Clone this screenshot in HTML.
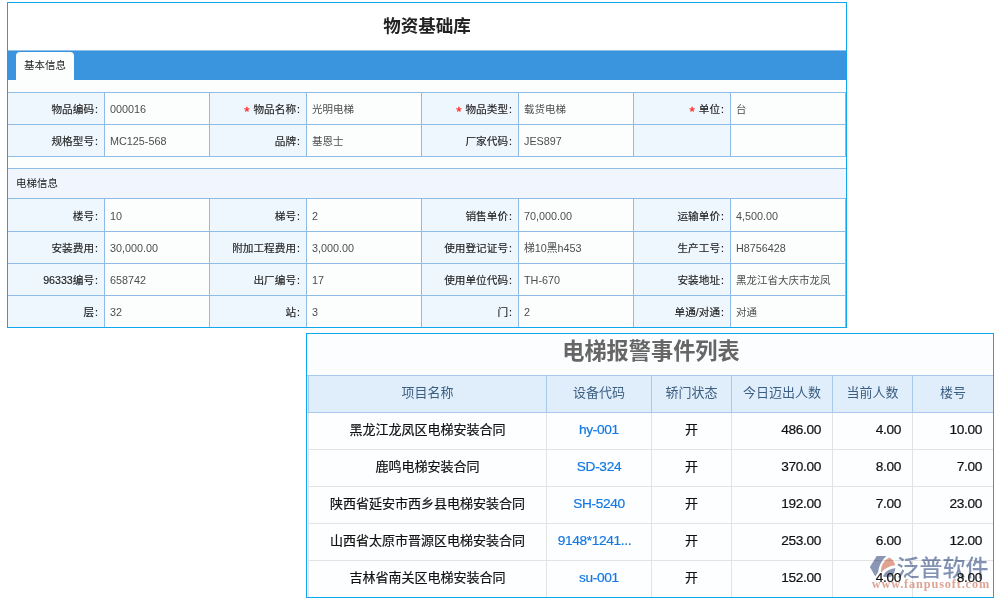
<!DOCTYPE html>
<html lang="zh-CN"><head><meta charset="utf-8"><title>物资基础库</title>
<style>
html,body{margin:0;padding:0;background:#fff;}
body{width:1000px;height:600px;position:relative;overflow:hidden;font-family:"Liberation Sans","Noto Sans CJK SC",sans-serif;}
div{position:absolute;box-sizing:border-box;white-space:nowrap;overflow:hidden;}
.c{font-size:10.5px;color:#333;}
.lab{font-size:10.65px;background:#eff7fe;text-align:right;padding-right:6px;padding-top:1px;color:#222;-webkit-text-stroke:0.15px #222;}
.co{margin-left:1px;}
.cj{font-size:10.5px !important;}
.val{background:#fcfefe;text-align:left;padding-left:5px;padding-top:1px;color:#4d4d4d;font-size:10.8px;}
.req{color:#f22;-webkit-text-stroke:0.3px #f22;font-size:13.5px;line-height:1px;position:relative;top:2.5px;margin-right:1px;}
.ln{background:#8fbce4;}
.t2 .hd{background:#e0edfb;color:#3b5f80;font-size:13px;text-align:center;}
.t2 .td{background:#fdfeff;color:#111;font-size:13px;-webkit-text-stroke:0.2px #111;}
.ctr{text-align:center;}
.t2 .num{text-align:right;padding-right:11px;font-size:13.7px;letter-spacing:-0.35px;}
.t2 .lnk{color:#1479e4;-webkit-text-stroke:0.2px #1479e4;font-size:13.7px;letter-spacing:-0.35px;}
</style></head><body>

<div style="left:7px;top:2px;width:840px;height:326px;border:1px solid #0fa8ee;background:#fff;"></div>
<div style="left:8px;top:3px;width:838px;height:47px;line-height:47px;text-align:center;font-size:17.5px;font-weight:bold;color:#222;">物资基础库</div>
<div style="left:8px;top:50px;width:838px;height:30px;background:#3a94de;"></div>
<div style="left:8px;top:50px;width:838px;height:1px;background:#8dc1ec;"></div>
<div style="left:16px;top:52px;width:58px;height:28px;background:#fcfefe;border-radius:4px 4px 0 0;text-align:center;line-height:26px;font-size:10.5px;color:#222;">基本信息</div>
<div style="left:8px;top:80px;width:838px;height:12px;background:#fcfefe;"></div>
<div class="ln" style="left:8px;top:92px;width:838px;height:65px;"></div>
<div class="c lab" style="left:8px;top:93px;width:96px;height:31px;line-height:31px">物品编码<span class="co">:</span></div>
<div class="c val" style="left:105px;top:93px;width:104px;height:31px;line-height:31px">000016</div>
<div class="c lab" style="left:210px;top:93px;width:96px;height:31px;line-height:31px"><span class="req">*</span> 物品名称<span class="co">:</span></div>
<div class="c val cj" style="left:307px;top:93px;width:114px;height:31px;line-height:31px">光明电梯</div>
<div class="c lab" style="left:422px;top:93px;width:96px;height:31px;line-height:31px"><span class="req">*</span> 物品类型<span class="co">:</span></div>
<div class="c val cj" style="left:519px;top:93px;width:114px;height:31px;line-height:31px">载货电梯</div>
<div class="c lab" style="left:634px;top:93px;width:96px;height:31px;line-height:31px"><span class="req">*</span> 单位<span class="co">:</span></div>
<div class="c val cj" style="left:731px;top:93px;width:114px;height:31px;line-height:31px">台</div>
<div class="c lab" style="left:8px;top:125px;width:96px;height:31px;line-height:31px">规格型号<span class="co">:</span></div>
<div class="c val" style="left:105px;top:125px;width:104px;height:31px;line-height:31px">MC125-568</div>
<div class="c lab" style="left:210px;top:125px;width:96px;height:31px;line-height:31px">品牌<span class="co">:</span></div>
<div class="c val cj" style="left:307px;top:125px;width:114px;height:31px;line-height:31px">基恩士</div>
<div class="c lab" style="left:422px;top:125px;width:96px;height:31px;line-height:31px">厂家代码<span class="co">:</span></div>
<div class="c val" style="left:519px;top:125px;width:114px;height:31px;line-height:31px">JES897</div>
<div class="c lab" style="left:634px;top:125px;width:96px;height:31px;line-height:31px"></div>
<div class="c val" style="left:731px;top:125px;width:114px;height:31px;line-height:31px"></div>
<div style="left:8px;top:157px;width:838px;height:11px;background:#fcfefe;"></div>
<div class="ln" style="left:8px;top:168px;width:838px;height:159px;"></div>
<div class="c" style="left:8px;top:169px;width:838px;height:29px;line-height:29px;background:#f1f5fe;padding-left:8px;color:#222;">电梯信息</div>
<div class="c lab" style="left:8px;top:199px;width:96px;height:32px;line-height:32px">楼号<span class="co">:</span></div>
<div class="c val" style="left:105px;top:199px;width:104px;height:32px;line-height:32px">10</div>
<div class="c lab" style="left:210px;top:199px;width:96px;height:32px;line-height:32px">梯号<span class="co">:</span></div>
<div class="c val" style="left:307px;top:199px;width:114px;height:32px;line-height:32px">2</div>
<div class="c lab" style="left:422px;top:199px;width:96px;height:32px;line-height:32px">销售单价<span class="co">:</span></div>
<div class="c val" style="left:519px;top:199px;width:114px;height:32px;line-height:32px">70,000.00</div>
<div class="c lab" style="left:634px;top:199px;width:96px;height:32px;line-height:32px">运输单价<span class="co">:</span></div>
<div class="c val" style="left:731px;top:199px;width:114px;height:32px;line-height:32px">4,500.00</div>
<div class="c lab" style="left:8px;top:232px;width:96px;height:31px;line-height:31px">安装费用<span class="co">:</span></div>
<div class="c val" style="left:105px;top:232px;width:104px;height:31px;line-height:31px">30,000.00</div>
<div class="c lab" style="left:210px;top:232px;width:96px;height:31px;line-height:31px">附加工程费用<span class="co">:</span></div>
<div class="c val" style="left:307px;top:232px;width:114px;height:31px;line-height:31px">3,000.00</div>
<div class="c lab" style="left:422px;top:232px;width:96px;height:31px;line-height:31px">使用登记证号<span class="co">:</span></div>
<div class="c val" style="left:519px;top:232px;width:114px;height:31px;line-height:31px">梯10黑h453</div>
<div class="c lab" style="left:634px;top:232px;width:96px;height:31px;line-height:31px">生产工号<span class="co">:</span></div>
<div class="c val" style="left:731px;top:232px;width:114px;height:31px;line-height:31px">H8756428</div>
<div class="c lab" style="left:8px;top:264px;width:96px;height:31px;line-height:31px">96333编号<span class="co">:</span></div>
<div class="c val" style="left:105px;top:264px;width:104px;height:31px;line-height:31px">658742</div>
<div class="c lab" style="left:210px;top:264px;width:96px;height:31px;line-height:31px">出厂编号<span class="co">:</span></div>
<div class="c val" style="left:307px;top:264px;width:114px;height:31px;line-height:31px">17</div>
<div class="c lab" style="left:422px;top:264px;width:96px;height:31px;line-height:31px">使用单位代码<span class="co">:</span></div>
<div class="c val" style="left:519px;top:264px;width:114px;height:31px;line-height:31px">TH-670</div>
<div class="c lab" style="left:634px;top:264px;width:96px;height:31px;line-height:31px">安装地址<span class="co">:</span></div>
<div class="c val cj" style="left:731px;top:264px;width:114px;height:31px;line-height:31px">黑龙江省大庆市龙凤</div>
<div class="c lab" style="left:8px;top:296px;width:96px;height:31px;line-height:31px">层<span class="co">:</span></div>
<div class="c val" style="left:105px;top:296px;width:104px;height:31px;line-height:31px">32</div>
<div class="c lab" style="left:210px;top:296px;width:96px;height:31px;line-height:31px">站<span class="co">:</span></div>
<div class="c val" style="left:307px;top:296px;width:114px;height:31px;line-height:31px">3</div>
<div class="c lab" style="left:422px;top:296px;width:96px;height:31px;line-height:31px">门<span class="co">:</span></div>
<div class="c val" style="left:519px;top:296px;width:114px;height:31px;line-height:31px">2</div>
<div class="c lab" style="left:634px;top:296px;width:96px;height:31px;line-height:31px">单通/对通<span class="co">:</span></div>
<div class="c val cj" style="left:731px;top:296px;width:114px;height:31px;line-height:31px">对通</div>
<div style="left:306px;top:333px;width:688px;height:265px;border:1px solid #0fa8ee;background:#fcfdfe;"></div>
<div style="left:307px;top:334px;width:686px;height:41px;line-height:35px;text-align:center;font-size:22.2px;font-weight:bold;color:#666;background:#fcfdfe;padding-left:2px;">电梯报警事件列表</div>
<div class="t2" style="left:307px;top:375px;width:686px;height:222px;background:#e3e3e3;overflow:visible;">
<div style="left:0;top:0;width:686px;height:38px;background:#a9c9ea;"></div>
<div style="left:0;top:1px;width:1px;height:36px;background:#ddebfa;"></div>
<div style="left:0;top:38px;width:1px;height:184px;background:#fdfeff;"></div>
<div class="hd" style="left:2px;top:1px;width:237px;height:36px;line-height:34px;">项目名称</div>
<div class="hd" style="left:240px;top:1px;width:104px;height:36px;line-height:34px;">设备代码</div>
<div class="hd" style="left:345px;top:1px;width:79px;height:36px;line-height:34px;">轿门状态</div>
<div class="hd" style="left:425px;top:1px;width:100px;height:36px;line-height:34px;">今日迈出人数</div>
<div class="hd" style="left:526px;top:1px;width:79px;height:36px;line-height:34px;">当前人数</div>
<div class="hd" style="left:606px;top:1px;width:80px;height:36px;line-height:34px;">楼号</div>
<div class="td ctr" style="left:2px;top:38px;width:237px;height:36px;line-height:34px;">黑龙江龙凤区电梯安装合同</div>
<div class="td ctr lnk" style="left:240px;top:38px;width:104px;height:36px;line-height:34px;">hy-001</div>
<div class="td ctr" style="left:345px;top:38px;width:79px;height:36px;line-height:34px;">开</div>
<div class="td num" style="left:425px;top:38px;width:100px;height:36px;line-height:34px;">486.00</div>
<div class="td num" style="left:526px;top:38px;width:79px;height:36px;line-height:34px;">4.00</div>
<div class="td num" style="left:606px;top:38px;width:80px;height:36px;line-height:34px;">10.00</div>
<div class="td ctr" style="left:2px;top:75px;width:237px;height:36px;line-height:34px;">鹿鸣电梯安装合同</div>
<div class="td ctr lnk" style="left:240px;top:75px;width:104px;height:36px;line-height:34px;">SD-324</div>
<div class="td ctr" style="left:345px;top:75px;width:79px;height:36px;line-height:34px;">开</div>
<div class="td num" style="left:425px;top:75px;width:100px;height:36px;line-height:34px;">370.00</div>
<div class="td num" style="left:526px;top:75px;width:79px;height:36px;line-height:34px;">8.00</div>
<div class="td num" style="left:606px;top:75px;width:80px;height:36px;line-height:34px;">7.00</div>
<div class="td ctr" style="left:2px;top:112px;width:237px;height:36px;line-height:34px;">陕西省延安市西乡县电梯安装合同</div>
<div class="td ctr lnk" style="left:240px;top:112px;width:104px;height:36px;line-height:34px;">SH-5240</div>
<div class="td ctr" style="left:345px;top:112px;width:79px;height:36px;line-height:34px;">开</div>
<div class="td num" style="left:425px;top:112px;width:100px;height:36px;line-height:34px;">192.00</div>
<div class="td num" style="left:526px;top:112px;width:79px;height:36px;line-height:34px;">7.00</div>
<div class="td num" style="left:606px;top:112px;width:80px;height:36px;line-height:34px;">23.00</div>
<div class="td ctr" style="left:2px;top:149px;width:237px;height:36px;line-height:34px;">山西省太原市晋源区电梯安装合同</div>
<div class="td ctr lnk" style="left:240px;top:149px;width:104px;height:36px;line-height:34px;padding-right:9px;">9148*1241...</div>
<div class="td ctr" style="left:345px;top:149px;width:79px;height:36px;line-height:34px;">开</div>
<div class="td num" style="left:425px;top:149px;width:100px;height:36px;line-height:34px;">253.00</div>
<div class="td num" style="left:526px;top:149px;width:79px;height:36px;line-height:34px;">6.00</div>
<div class="td num" style="left:606px;top:149px;width:80px;height:36px;line-height:34px;">12.00</div>
<div class="td ctr" style="left:2px;top:186px;width:237px;height:36px;line-height:34px;">吉林省南关区电梯安装合同</div>
<div class="td ctr lnk" style="left:240px;top:186px;width:104px;height:36px;line-height:34px;">su-001</div>
<div class="td ctr" style="left:345px;top:186px;width:79px;height:36px;line-height:34px;">开</div>
<div class="td num" style="left:425px;top:186px;width:100px;height:36px;line-height:34px;">152.00</div>
<div class="td num" style="left:526px;top:186px;width:79px;height:36px;line-height:34px;">4.00</div>
<div class="td num" style="left:606px;top:186px;width:80px;height:36px;line-height:34px;">8.00</div>
</div>
<svg width="140" height="52" viewBox="860 548 140 52" style="position:absolute;left:860px;top:548px;mix-blend-mode:multiply;">
<path d="M869.9 567 L876.7 556 L886.4 556 C882.5 559.5 879 565 878.2 572 L875.3 576.6 Z" fill="#8c97b5"/>
<path d="M889.5 557.4 C892.5 559 894.5 562 895.2 565.3 C889 566 884.5 568.5 881 572.7 C880.6 568 882 561 889.5 557.4 Z" fill="#e3a48f"/>
<path d="M883.3 575.4 C885.5 571.5 889.5 568.8 895.3 568.1 C895.2 571.5 893.8 574.5 891.2 576.8 L883.6 576.9 Z" fill="#8c97b5"/>
<text x="896.5" y="576.2" font-family="'Liberation Sans','Noto Sans CJK SC',sans-serif" font-weight="500" font-size="23" fill="#8492b2">泛普软件</text>
<text id="wmurl" x="871.7" y="587.8" font-family="'Liberation Serif',serif" font-weight="bold" font-size="12.3" fill="#e0a593" letter-spacing="0.85">www.fanpusoft.com</text>
</svg>
</body></html>
